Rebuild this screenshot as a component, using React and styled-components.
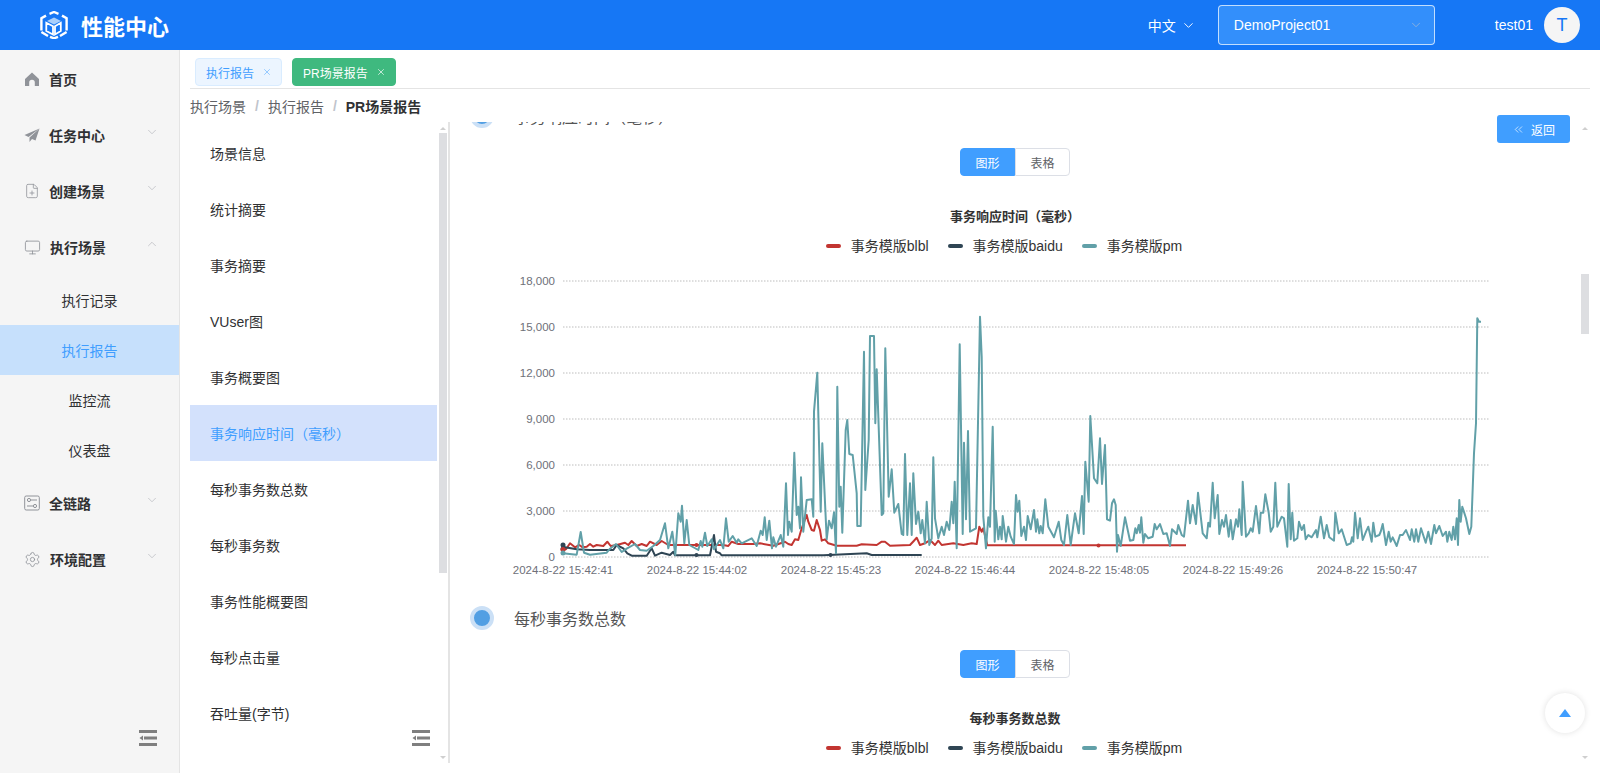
import React from "react";
import styled, { createGlobalStyle } from "styled-components";
import { ChevronDown, ChevronUp, ChevronsLeft, X, Monitor, FilePlus, Settings } from "lucide-react";

const GlobalStyle = createGlobalStyle`
    html, body {
        margin: 0;
        padding: 0;
        height: 100%;
        overflow: hidden;
        background: #fff;
    }
    body {
        font-family: "Liberation Sans", "Noto Sans CJK SC", sans-serif;
        color: #303133;
    }
`;

const Page = styled.div`
    display: flex;
    flex-direction: column;
    height: 100vh;
`;

const Header = styled.header`
    flex: 0 0 50px;
    display: flex;
    align-items: center;
    padding: 0 20px 0 40px;
    background: #1677f5;
    color: #fff;
`;

const Brand = styled.div`
    display: flex;
    align-items: center;
    gap: 13px;
    font-size: 22px;
    font-weight: 700;
    letter-spacing: 0;
`;

const HeaderRight = styled.div`
    margin-left: auto;
    display: flex;
    align-items: center;
`;

const Lang = styled.div`
    display: flex;
    align-items: center;
    gap: 5px;
    font-size: 14px;
`;

const ProjectSelect = styled.div`
    box-sizing: border-box;
    width: 217px;
    height: 40px;
    margin-left: 22px;
    padding: 0 11px 0 15px;
    display: flex;
    align-items: center;
    justify-content: space-between;
    background: #338ffb;
    border: 1px solid rgba(255, 255, 255, 0.7);
    border-radius: 4px;
    font-size: 14px;
`;

const UserName = styled.span`
    margin-left: 60px;
    font-size: 14px;
`;

const Avatar = styled.div`
    width: 36px;
    height: 36px;
    margin-left: 11px;
    border-radius: 50%;
    background: #f5f5f5;
    color: #1677f5;
    font-size: 18px;
    display: flex;
    align-items: center;
    justify-content: center;
`;

const Main = styled.div`
    flex: 1;
    min-height: 0;
    display: flex;
`;

const Sidebar = styled.aside`
    position: relative;
    box-sizing: border-box;
    flex: 0 0 180px;
    padding-top: 1px;
    background: #f5f5f5;
    border-right: 1px solid #e4e4e4;
`;

const MenuItem = styled.div`
    height: 56px;
    padding-left: 24px;
    display: flex;
    align-items: center;
    font-size: 14px;
    font-weight: 700;
    color: #303133;
`;

const MenuIcon = styled.span`
    flex: 0 0 16px;
    height: 16px;
    margin-right: 9px;
    display: flex;
    align-items: center;
    justify-content: center;
    color: #909399;
`;

const MenuArrow = styled.span`
    margin-left: auto;
    margin-right: 20px;
    margin-top: -6px;
    display: flex;
    color: #a8abb2;
`;

const SubItem = styled.div`
    height: 50px;
    display: flex;
    align-items: center;
    justify-content: center;
    font-size: 14px;
    color: ${props => (props.$active ? "#409eff" : "#303133")};
    background: ${props => (props.$active ? "#c6e0fc" : "transparent")};
`;

const CollapseButton = styled.div`
    position: absolute;
    right: ${props => props.$right}px;
    bottom: 27px;
    display: flex;
`;

const Content = styled.main`
    flex: 1;
    min-width: 0;
    display: flex;
    flex-direction: column;
    padding: 0 10px 10px;
`;

const TagBar = styled.div`
    flex: 0 0 39px;
    box-sizing: border-box;
    display: flex;
    align-items: flex-start;
    gap: 10px;
    padding: 8px 0 0 5px;
    border-bottom: 1px solid #e4e4e4;
`;

const Tag = styled.div`
    box-sizing: border-box;
    height: 28px;
    padding: 0 9px 0 10px;
    display: flex;
    align-items: center;
    gap: 8px;
    font-size: 12px;
    border-radius: 4px;
    border: 1px solid ${props => (props.$green ? "#3fb97f" : "#d9ecff")};
    background: ${props => (props.$green ? "#3fb97f" : "#ecf5ff")};
    color: ${props => (props.$green ? "#fff" : "#409eff")};
`;

const Breadcrumb = styled.nav`
    flex: 0 0 33px;
    display: flex;
    align-items: center;
    font-size: 14px;
    color: #606266;
`;

const CrumbSep = styled.span`
    margin: 0 9px;
    font-weight: 700;
    color: #c0c4cc;
`;

const CrumbCurrent = styled.span`
    font-weight: 700;
    color: #303133;
`;

const Body = styled.div`
    position: relative;
    flex: 1;
    min-height: 0;
    display: flex;
`;

const SidePanel = styled.div`
    position: relative;
    box-sizing: border-box;
    flex: 0 0 260px;
    display: flex;
    overflow: hidden;
    border-right: 2px solid #e4e4e4;
`;

const SideList = styled.ul`
    flex: 0 0 247px;
    margin: 0;
    padding: 3px 0 0;
    list-style: none;
`;

const SideItem = styled.li`
    box-sizing: border-box;
    height: 56px;
    padding-left: 20px;
    display: flex;
    align-items: center;
    font-size: 14px;
    color: ${props => (props.$active ? "#409eff" : "#303133")};
    background: ${props => (props.$active ? "#d3e1fc" : "transparent")};
`;

const ScrollTrack = styled.div`
    flex: 0 0 ${props => props.$width}px;
    display: flex;
    flex-direction: column;
    align-items: center;
    margin-left: ${props => props.$left}px;
    padding: 5px 0 4px;
`;

const ScrollArrow = styled.span`
    width: 0;
    height: 0;
    border-left: 3px solid transparent;
    border-right: 3px solid transparent;
    border-bottom: ${props => (props.$down ? "none" : "3px solid #cfcfcf")};
    border-top: ${props => (props.$down ? "3px solid #cfcfcf" : "none")};
`;

const ScrollThumb = styled.div`
    width: 8px;
    height: ${props => props.$height}px;
    margin-top: ${props => props.$top}px;
    margin-bottom: auto;
    background: #dddee1;
`;

const ReportPanel = styled.div`
    flex: 1;
    min-width: 0;
    overflow: hidden;
`;

const ReportInner = styled.div`
    margin-top: -18px;
    width: 1130px;
`;

const SectionHead = styled.div`
    height: 24px;
    padding-left: 20px;
    display: flex;
    align-items: center;
    gap: 20px;
    font-size: 16px;
    color: #555;
`;

const SectionDot = styled.span`
    box-sizing: border-box;
    width: 24px;
    height: 24px;
    border-radius: 50%;
    background: #529fe3;
    border: 4px solid #cbe0f6;
`;

const Toggle = styled.div`
    display: flex;
    justify-content: center;
    margin-top: 20px;
`;

const ToggleButton = styled.div`
    box-sizing: border-box;
    width: 55px;
    height: 28px;
    display: flex;
    align-items: center;
    justify-content: center;
    font-size: 12px;
    background: ${props => (props.$active ? "#409eff" : "#fff")};
    color: ${props => (props.$active ? "#fff" : "#606266")};
    border: 1px solid ${props => (props.$active ? "#409eff" : "#dcdfe6")};
    border-radius: ${props => (props.$active ? "4px 0 0 4px" : "0 4px 4px 0")};
`;

const ChartTitle = styled.div`
    margin-top: 31px;
    text-align: center;
    font-size: 13px;
    line-height: 20px;
    font-weight: 700;
    color: #333;
`;

const Legend = styled.div`
    margin-top: 9px;
    padding-right: 22px;
    display: flex;
    justify-content: center;
    gap: 19px;
    font-size: 14px;
    line-height: 20px;
    color: #333;
`;

const LegendItem = styled.div`
    display: flex;
    align-items: center;
    gap: 10px;
`;

const LegendMark = styled.span`
    width: 15px;
    height: 4px;
    border-radius: 2px;
    background: ${props => props.$color};
`;

const ChartSvg = styled.svg`
    display: block;
    width: 1130px;
    height: 330px;
    margin-bottom: 20px;
`;

const BackButton = styled.button`
    position: absolute;
    top: -7px;
    right: 20px;
    width: 73px;
    height: 28px;
    padding: 0;
    display: flex;
    align-items: center;
    justify-content: center;
    gap: 6px;
    font: inherit;
    font-size: 12px;
    color: #fff;
    background: #409eff;
    border: none;
    border-radius: 3px;
`;

const BackTop = styled.div`
    position: absolute;
    top: 571px;
    right: 5px;
    width: 40px;
    height: 40px;
    border-radius: 50%;
    background: #fff;
    box-shadow: 0 0 6px rgba(0, 0, 0, 0.12);
    display: flex;
    align-items: center;
    justify-content: center;
`;

const BackTopArrow = styled.span`
    width: 0;
    height: 0;
    border-left: 6px solid transparent;
    border-right: 6px solid transparent;
    border-bottom: 8px solid #409eff;
`;

const RED = "#c23531";
const NAVY = "#2f4554";
const TEAL = "#61a0a8";

// traced by hand, in 3x crop coordinates: page x = 490 + x / 3, page y = 260 + y / 3
const tealPart1 = "218,880 260,884 272,816 282,878 300,884 350,878 360,866 378,852 395,876 410,866 435,852 450,870 470,872 490,858 510,840 525,790 535,865 547,815 556,885 565,760 572,785 576,737 583,850 590,780 598,855 625,870 632,843 637,860 645,818 652,858 665,838 672,868 680,855 690,840 700,865 708,775 716,845 728,828 740,848 745,838 755,850 785,835 800,858 812,812 818,825 824,772 830,840 838,782 846,865 850,832 858,860 872,825 880,860 888,670 894,825 898,785 905,815 913,578 920,765 925,740 930,805 933,652 940,815 950,720 965,718 970,770 972,455 982,338 992,755 997,550 1010,838 1017,782 1025,805 1032,757 1038,880 1042,380 1048,740 1052,680 1057,818 1067,510 1072,480 1078,582 1088,585 1100,700 1102,798 1112,798 1122,275 1126,690 1136,540 1140,228 1152,228 1156,490 1160,328 1175,765 1180,760 1186,265 1196,710 1205,628 1213,758 1225,732 1235,822 1240,825 1245,582 1252,825 1260,670 1265,825 1270,640 1278,792 1285,755 1292,820 1297,780 1305,850 1310,725 1318,855 1325,835 1330,592 1335,775 1345,835 1355,800 1362,825 1370,785 1378,810 1385,725 1390,790 1394,665 1400,865 1409,253 1418,822 1422,548 1428,778 1434,513 1440,815 1458,805";
// second crop starts 490px to the right, so x here is offset by 1470
const tealPart2 = "0,170 5,290 10,770 18,865 25,772 30,800 38,500 44,845 47,752 55,838 60,800 65,838 68,768 78,845 85,800 92,830 102,852 108,705 113,755 118,722 124,828 132,800 138,840 143,768 152,808 162,750 168,815 172,778 178,820 182,798 188,820 196,718 205,800 222,832 236,785 244,840 252,855 262,765 272,855 285,760 296,820 306,708 311,822 316,605 326,725 331,468 342,655 352,670 360,535 366,672 375,555 381,778 390,782 396,730 402,718 407,735 411,875 414,825 422,858 435,772 450,842 460,840 466,805 470,820 476,795 480,818 484,772 490,848 495,822 505,835 518,830 524,792 530,808 540,792 550,822 560,820 570,858 576,808 590,822 595,795 605,825 612,830 624,722 630,790 638,735 648,792 654,698 668,820 680,835 685,788 690,800 698,668 704,775 713,705 718,822 726,780 732,800 738,765 746,830 752,780 758,838 768,778 774,800 778,748 785,825 788,665 798,830 806,820 812,805 818,815 828,738 838,820 842,758 850,758 856,703 866,758 872,815 880,800 886,668 892,800 905,770 912,775 922,860 926,672 932,838 937,758 942,842 952,835 957,785 965,810 972,795 977,838 985,825 995,832 1008,810 1012,832 1022,770 1032,835 1040,795 1048,832 1062,842 1066,758 1076,820 1085,808 1100,855 1112,850 1116,832 1120,845 1125,758 1133,835 1140,775 1148,840 1158,815 1165,800 1175,845 1180,788 1186,830 1198,825 1202,815 1208,792 1218,855 1226,815 1232,845 1238,832 1250,858 1260,825 1268,825 1278,810 1290,840 1295,808 1303,845 1308,808 1315,845 1323,805 1337,848 1345,815 1353,852 1363,795 1368,820 1378,798 1388,828 1398,815 1402,845 1408,815 1415,840 1420,800 1425,838 1430,775 1434,855 1438,720 1442,785 1447,740 1458,775 1468,822 1474,800 1482,580 1488,490 1492,175 1497,185 1503,185";
const redLine = "218,868 228,868 240,850 255,862 268,855 278,862 290,860 300,852 310,860 320,855 340,858 352,845 362,858 380,855 405,848 415,855 425,843 440,858 455,852 470,858 480,845 500,855 515,843 535,855 620,855 640,855 700,855 715,858 725,845 745,852 790,852 810,850 850,857 885,845 895,852 905,855 915,838 925,840 935,805 950,765 955,785 965,810 972,812 980,780 990,810 995,842 1005,838 1015,850 1040,857 1100,857 1115,853 1160,855 1175,845 1185,845 1200,857 1260,855 1272,842 1280,833 1290,855 1305,850 1320,840 1335,855 1345,842 1355,855 1390,850 1420,855 1445,850 1460,852 1468,800 1475,815 1480,805 1492,856 2088,856";
const navyLine = "218,855 225,862 260,868 300,870 370,870 380,855 400,865 412,880 425,887 470,887 485,865 495,887 515,878 540,885 550,875 555,886 660,886 672,825 678,875 690,880 695,886 1000,886 1130,880 1145,885 1295,885";

function toPage(raw, offset = 0) {
    return raw
        .split(" ")
        .map(pair => {
            const [x, y] = pair.split(",").map(Number);
            return `${(490 + (x + offset) / 3).toFixed(1)},${(260 + y / 3).toFixed(1)}`;
        })
        .join(" ");
}

const yTicks = [
    [281, "18,000"],
    [327, "15,000"],
    [373, "12,000"],
    [419, "9,000"],
    [465, "6,000"],
    [511, "3,000"],
    [557, "0"],
];

const xTicks = [
    [563, "2024-8-22 15:42:41"],
    [697, "2024-8-22 15:44:02"],
    [831, "2024-8-22 15:45:23"],
    [965, "2024-8-22 15:46:44"],
    [1099, "2024-8-22 15:48:05"],
    [1233, "2024-8-22 15:49:26"],
    [1367, "2024-8-22 15:50:47"],
];

function LineChart() {
    const font = { fontSize: 11.5, fill: "#6e7079", fontFamily: "Liberation Sans, sans-serif" };
    return (
        <ChartSvg viewBox="450 256 1130 330">
            {yTicks.map(([y, label]) => (
                <g key={label}>
                    <line x1="563" x2="1489" y1={y} y2={y} stroke="#bdbdbd" strokeDasharray="1.5 1.5" />
                    <text x="555" y={y + 4} textAnchor="end" {...font}>{label}</text>
                </g>
            ))}
            {xTicks.map(([x, label]) => (
                <text key={label} x={x} y="574" textAnchor="middle" {...font}>{label}</text>
            ))}
            <g fill="none" strokeWidth="2" strokeLinejoin="round">
                <polyline points={toPage(redLine)} stroke={RED} />
                <polyline points={toPage(navyLine)} stroke={NAVY} />
                <polyline points={`${toPage(tealPart1)} ${toPage(tealPart2, 1470)}`} stroke={TEAL} />
            </g>
            <circle cx="563" cy="549" r="2.5" fill={NAVY} />
            <circle cx="563" cy="549" r="0" fill={NAVY} />
            <circle cx="563" cy="545" r="2.5" fill={NAVY} />
            <circle cx="696.5" cy="555" r="2" fill={NAVY} />
            <circle cx="830.5" cy="555" r="2" fill={NAVY} />
            <circle cx="563" cy="549.5" r="2.5" fill={RED} />
            <circle cx="696.5" cy="545" r="2" fill={RED} />
            <circle cx="1098.5" cy="545.5" r="2" fill={RED} />
            <circle cx="563" cy="553" r="2.5" fill={TEAL} />
        </ChartSvg>
    );
}

function Logo() {
    return (
        <svg width="28" height="28" viewBox="0 0 28 28">
            <g fill="none" stroke="#fff" strokeWidth="2.4">
                <path d="M9.5 2.8 L14 1 L18.5 2.8" />
                <path d="M22 4.6 L26.6 7.2 V19.5 M26.6 21 L20 25" />
                <path d="M6 4.6 L1.4 7.2 V19.5 M1.4 21 L8 25" />
                <path d="M10 25.8 L14 27.4 L18 25.8" />
            </g>
            <path d="M14 6.5 L21 10 L14 13.5 L7 10 Z" fill="#a9cffb" />
            <path d="M6.3 11.8 L13 15.2 V23.5 L6.3 20 Z M20.8 11.8 V20 L15 23.5 V15.2 Z" fill="none" stroke="#fff" strokeWidth="1.8" />
        </svg>
    );
}

function HomeIcon() {
    return (
        <svg width="16" height="16" viewBox="0 0 16 16" fill="currentColor">
            <path d="M8 1.5 L15 8 V15 H10.8 V11.5 A2.8 2.8 0 0 0 5.2 11.5 V15 H1 V8 Z" />
        </svg>
    );
}

function PlaneIcon() {
    return (
        <svg width="16" height="16" viewBox="0 0 16 16" fill="currentColor">
            <path d="M15.5 1.5 L0.5 8 L4.5 10 Z" />
            <path d="M15.5 1.5 L5.5 10.5 L5.5 15 L8 12 L11.5 13.5 Z" />
        </svg>
    );
}

function PanelIcon() {
    return (
        <svg width="16" height="16" viewBox="0 0 16 16" fill="none" stroke="currentColor">
            <rect x="0.7" y="1" width="14.6" height="14" rx="1.5" />
            <circle cx="5" cy="5" r="1.6" />
            <path d="M7 5 H13 M3 11 H9" />
            <circle cx="11" cy="11" r="1.6" />
        </svg>
    );
}

function CollapseIcon() {
    return (
        <svg width="18" height="16" viewBox="0 0 18 16" fill="#7f7f7f">
            <rect x="0" y="0" width="18" height="3" />
            <rect x="5" y="6.5" width="13" height="3" />
            <path d="M0.5 8 L4 5.5 V10.5 Z" />
            <rect x="0" y="13" width="18" height="3" />
        </svg>
    );
}

const thinChevron = { size: 14, strokeWidth: 1 };

const sideItems = [
    "场景信息",
    "统计摘要",
    "事务摘要",
    "VUser图",
    "事务概要图",
    "事务响应时间（毫秒）",
    "每秒事务数总数",
    "每秒事务数",
    "事务性能概要图",
    "每秒点击量",
    "吞吐量(字节)",
    "错误百分比",
];

function ChartLegend() {
    return (
        <Legend>
            <LegendItem><LegendMark $color={RED} />事务模版blbl</LegendItem>
            <LegendItem><LegendMark $color={NAVY} />事务模版baidu</LegendItem>
            <LegendItem><LegendMark $color={TEAL} />事务模版pm</LegendItem>
        </Legend>
    );
}

function ViewToggle() {
    return (
        <Toggle>
            <ToggleButton $active>图形</ToggleButton>
            <ToggleButton>表格</ToggleButton>
        </Toggle>
    );
}

export default function App() {
    return (
        <Page>
            <GlobalStyle />
            <Header>
                <Brand>
                    <Logo />
                    性能中心
                </Brand>
                <HeaderRight>
                    <Lang>中文 <ChevronDown size={15} strokeWidth={1.5} /></Lang>
                    <ProjectSelect>
                        DemoProject01
                        <ChevronDown size={14} strokeWidth={1} color="#c0c4cc" />
                    </ProjectSelect>
                    <UserName>test01</UserName>
                    <Avatar>T</Avatar>
                </HeaderRight>
            </Header>
            <Main>
                <Sidebar>
                    <MenuItem><MenuIcon><HomeIcon /></MenuIcon>首页</MenuItem>
                    <MenuItem>
                        <MenuIcon><PlaneIcon /></MenuIcon>任务中心
                        <MenuArrow><ChevronDown {...thinChevron} /></MenuArrow>
                    </MenuItem>
                    <MenuItem>
                        <MenuIcon><FilePlus size={16} strokeWidth={1.2} /></MenuIcon>创建场景
                        <MenuArrow><ChevronDown {...thinChevron} /></MenuArrow>
                    </MenuItem>
                    <MenuItem>
                        <MenuIcon><Monitor size={17} strokeWidth={1.2} /></MenuIcon>执行场景
                        <MenuArrow><ChevronUp {...thinChevron} /></MenuArrow>
                    </MenuItem>
                    <SubItem>执行记录</SubItem>
                    <SubItem $active>执行报告</SubItem>
                    <SubItem>监控流</SubItem>
                    <SubItem>仪表盘</SubItem>
                    <MenuItem>
                        <MenuIcon><PanelIcon /></MenuIcon>全链路
                        <MenuArrow><ChevronDown {...thinChevron} /></MenuArrow>
                    </MenuItem>
                    <MenuItem>
                        <MenuIcon><Settings size={17} strokeWidth={1.2} /></MenuIcon>环境配置
                        <MenuArrow><ChevronDown {...thinChevron} /></MenuArrow>
                    </MenuItem>
                    <CollapseButton $right={22}><CollapseIcon /></CollapseButton>
                </Sidebar>
                <Content>
                    <TagBar>
                        <Tag>执行报告 <X size={10} strokeWidth={1.2} /></Tag>
                        <Tag $green>PR场景报告 <X size={10} strokeWidth={1.6} /></Tag>
                    </TagBar>
                    <Breadcrumb>
                        执行场景<CrumbSep>/</CrumbSep>执行报告<CrumbSep>/</CrumbSep>
                        <CrumbCurrent>PR场景报告</CrumbCurrent>
                    </Breadcrumb>
                    <Body>
                        <SidePanel>
                            <SideList>
                                {sideItems.map(item => (
                                    <SideItem key={item} $active={item === "事务响应时间（毫秒）"}>{item}</SideItem>
                                ))}
                            </SideList>
                            <ScrollTrack $width={8} $left={2}>
                                <ScrollArrow />
                                <ScrollThumb $top={3} $height={440} />
                                <ScrollArrow $down />
                            </ScrollTrack>
                            <CollapseButton $right={18} style={{ bottom: 17 }}><CollapseIcon /></CollapseButton>
                        </SidePanel>
                        <ReportPanel>
                            <ReportInner>
                                <SectionHead>
                                    <SectionDot />
                                    事务响应时间（毫秒）
                                </SectionHead>
                                <ViewToggle />
                                <ChartTitle>事务响应时间（毫秒）</ChartTitle>
                                <ChartLegend />
                                <LineChart />
                                <SectionHead>
                                    <SectionDot />
                                    每秒事务数总数
                                </SectionHead>
                                <ViewToggle />
                                <ChartTitle>每秒事务数总数</ChartTitle>
                                <ChartLegend />
                            </ReportInner>
                        </ReportPanel>
                        <ScrollTrack $width={10} $left={0}>
                            <ScrollArrow />
                            <ScrollThumb $top={144} $height={60} />
                            <ScrollArrow $down />
                        </ScrollTrack>
                        <BackButton><ChevronsLeft size={13} strokeWidth={1.2} />返回</BackButton>
                        <BackTop><BackTopArrow /></BackTop>
                    </Body>
                </Content>
            </Main>
        </Page>
    );
}
